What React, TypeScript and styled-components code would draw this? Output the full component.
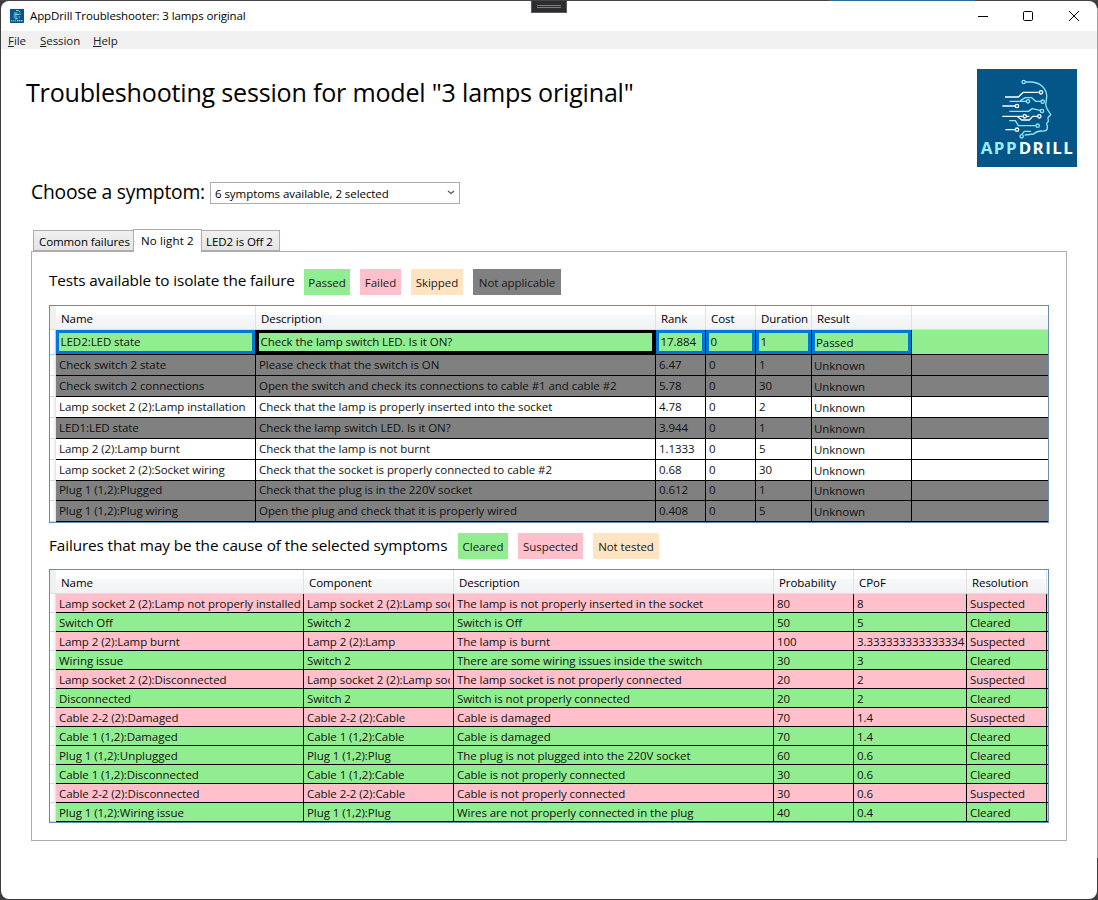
import React from "react";
import styled, { createGlobalStyle, css } from "styled-components";

const GREEN = "#90ee90";
const PINK = "#ffc0cb";
const BISQUE = "#ffe4c4";
const GRAY = "#808080";

const Global = createGlobalStyle`
  * { box-sizing: border-box; }
  html, body { margin: 0; padding: 0; }
  body {
    width: 1098px;
    height: 900px;
    overflow: hidden;
    background: #3c3c3e;
    color: #000;
    font-family: "Open Sans", "Noto Sans", sans-serif;
    font-size: 11.5px;
    letter-spacing: -0.06px;
    line-height: 16px;
  }
`;

const Desktop = styled.div`
  width: 1098px;
  height: 900px;
  padding: 1px;
  background: linear-gradient(90deg, #434247 0 829px, #2d6a96 829px 975px, #434247 975px) top / 100% 1px no-repeat,
    linear-gradient(#3c3c3e 0 8px, #a2a2a2 8px 858px, #3c3c3e 858px) right / 1px 100% no-repeat, #3c3c3e;
`;

const Window = styled.div`
  position: relative;
  width: 1096px;
  height: 898px;
  background: #fff;
  border-radius: 8px;
  overflow: hidden;
`;

const DragHandle = styled.div`
  position: absolute;
  left: 530px;
  top: -1px;
  width: 36px;
  height: 13px;
  background: #2d2d2f;
  border: 1px solid #5c5c5e;
  border-top: 0;
  display: flex;
  flex-direction: column;
  align-items: center;
  padding-top: 5px;
  gap: 1px;
  &::before, &::after {
    content: "";
    width: 24px;
    height: 1px;
    background: #7d7d7f;
  }
`;

const TitleBar = styled.header`
  display: flex;
  align-items: center;
  height: 30px;
  padding-left: 9px;
`;

const WindowTitle = styled.span`
  flex: 1;
  padding-left: 6px;
  letter-spacing: -0.11px;
`;

const Controls = styled.div`
  display: flex;
  gap: 35px;
  padding-right: 18px;
  svg { display: block; }
  svg:last-child { margin-left: 1px; }
`;

const MenuBar = styled.nav`
  display: flex;
  height: 18px;
  background: #f0f0f0;
  color: #212121;
  padding-left: 7px;
  gap: 14px;
  line-height: 19px;
`;

const MenuItem = styled.span<{ $w: number }>`
  width: ${(p) => p.$w}px;
  white-space: nowrap;
  u { text-underline-offset: 1px; text-decoration-thickness: 1px; }
`;

const Banner = styled.section`
  display: flex;
  justify-content: space-between;
  align-items: flex-start;
  height: 119px;
  padding: 20px 20px 0 25px;
`;

const Heading = styled.h1`
  margin: 5px 0 0;
  font-size: 25.1px;
  font-weight: 400;
  line-height: 36px;
  letter-spacing: -0.21px;
  white-space: nowrap;
`;

const Chooser = styled.section`
  display: flex;
  height: 61px;
  padding: 14px 0 0 30px;
`;

const ChooserLabel = styled.label`
  width: 179px;
  margin-top: -4px;
  font-size: 19.3px;
  line-height: 28px;
  letter-spacing: -0.23px;
  white-space: nowrap;
`;

const Combo = styled.div`
  display: flex;
  justify-content: space-between;
  width: 250px;
  height: 22px;
  padding: 3px 4px 0;
  border: 1px solid #acacac;
`;

const TabStrip = styled.div`
  position: relative;
  z-index: 1;
  display: flex;
  align-items: flex-end;
  height: 23px;
  margin: 0 0 -1px 32px;
`;

const Tab = styled.div<{ $w: number; $active?: boolean }>`
  width: ${(p) => p.$w}px;
  height: 21px;
  margin-bottom: 1px;
  padding: 3px 0 0 5px;
  border: 1px solid #acacac;
  background: linear-gradient(#f0f0f0, #e5e5e5);
  letter-spacing: -0.09px;
  white-space: nowrap;
  & + & { margin-left: -1px; padding-left: 4px; }
  ${(p) =>
    p.$active &&
    css`
      height: 23px;
      margin-bottom: 0;
      border-bottom: 0;
      background: #fff;
      letter-spacing: 0.15px;
      && { padding: 3px 0 0 7px; }
    `}
`;

const ActiveLabel = styled.span`
  display: block;
  padding-left: 3px;
`;

const Panel = styled.main`
  width: 1036px;
  height: 590px;
  margin-left: 30px;
  padding: 17px 17px 0;
  border: 1px solid #acacac;
`;

const Legend = styled.div`
  display: flex;
  gap: 10px;
  height: 26px;
`;

const LegendTitle = styled.h2<{ $w: number; $line: number }>`
  width: ${(p) => p.$w}px;
  margin: 0;
  font-size: 15.3px;
  font-weight: 400;
  line-height: ${(p) => p.$line}px;
  letter-spacing: -0.11px;
  white-space: nowrap;
`;

const Chip = styled.span<{ $w: number; $bg: string }>`
  width: ${(p) => p.$w}px;
  background: ${(p) => p.$bg};
  color: #1a1a1a;
  text-align: center;
  line-height: 28px;
  white-space: nowrap;
`;

const Grid = styled.div<{ $cols: string }>`
  --cols: ${(p) => p.$cols};
  width: 1000px;
  margin: 10px 0;
  border: 1px solid #688caf;
  overflow: hidden;
`;

const HeadRow = styled.div`
  display: grid;
  grid-template-columns: var(--cols);
  height: 24px;
  background: linear-gradient(#fff 0 40%, #f7f8fa 40%, #f1f2f4);
  border-bottom: 1px solid #dcdddf;
`;

const Corner = styled.div`
  background: #f0f0f0;
`;

const HeadCell = styled.div`
  padding: 5px 0 0 5px;
  border-right: 1px solid #e0e1e3;
  white-space: nowrap;
`;

const Row = styled.div<{ $h: number; $bg: string }>`
  display: grid;
  grid-template-columns: var(--cols);
  height: ${(p) => p.$h}px;
  background: ${(p) => p.$bg};
`;

const RowHeader = styled.div<{ $current?: boolean }>`
  background: linear-gradient(90deg, #fff 0 40%, #f1f2f4);
  border-right: 1px solid ${(p) => (p.$current ? "#9adcf7" : "#e4e5e7")};
  border-bottom: 1px solid ${(p) => (p.$current ? "#9adcf7" : "#d9dadc")};
`;

const Cell = styled.div<{ $frame?: string; $result?: boolean; $top: number }>`
  padding: ${(p) => p.$top + (p.$result ? 1 : 0)}px 0 0 ${(p) => (p.$result ? 2 : 3)}px;
  border-right: 1px solid #000;
  border-bottom: 1px solid #000;
  color: #111;
  white-space: nowrap;
  overflow: hidden;
  ${(p) =>
    p.$frame &&
    css`
      box-shadow: inset 0 0 0 3px ${p.$frame};
      padding-left: ${p.$result ? 4 : 4.6}px;
      padding-top: ${p.$result ? 5 : 4}px;
    `}
`;

const Clip = styled.span`
  display: block;
  margin-right: 3px;
  overflow: hidden;
`;

const Filler = styled.div`
  border-bottom: 1px solid #000;
`;

const AppIcon = () => (
  <svg width="14" height="14" viewBox="0 0 14 14">
    <rect width="14" height="14" fill="#045688" />
    <g fill="none" stroke="#9be8f5" strokeWidth="0.9">
      <path d="M6 1.5h2.5l1.5 2M4 4h3.5M3.5 6h3M5 5.5h4M3.5 8h3.5M8.5 8h1.5M5 9.7h3M10 4.5v1.5" />
    </g>
    <path d="M1 11.8h5" stroke="#9be8f5" strokeDasharray="1.2 .6" />
    <path d="M7 11.8h6" stroke="#fff" strokeDasharray="1.2 .6" />
  </svg>
);

const Logo = () => (
  <svg width="100" height="98" viewBox="33 27 300 294">
    <rect x="33" y="27" width="300" height="294" fill="#045688" />
    <g fill="none" stroke="#8ee6fa" strokeWidth="4" strokeLinejoin="round">
      <path d="M179 66H197C222 68 239 83 242 105C243 118 238 128 240 138C242 150 253 158 254 164C253 169 246 168 246 174L247 184L242 190L244 199C246 212 237 214 226 213C214 213 209 216 203 222L176 225" />
      <path d="M131 124H180M163 122L178 113H197L209 124H225" />
      <path d="M130 154H187L199 146L222 151" />
      <path d="M130 182H148L157 197H209" />
      <path d="M167 224L175 214H195" />
      <circle cx="173" cy="66" r="5" />
      <circle cx="186" cy="124" r="5" />
      <circle cx="230" cy="125" r="5" />
      <circle cx="228" cy="153" r="5" />
      <circle cx="215" cy="197" r="5" />
      <circle cx="167" cy="229" r="5" />
    </g>
    <g fill="none" stroke="#fff" strokeWidth="4" strokeLinejoin="round">
      <path d="M117 111H157L172 97H218" />
      <path d="M109 138H147" />
      <path d="M109 169H170M182 169H190M155 170L167 180H190L200 169H214" />
      <path d="M118 209H147" />
      <circle cx="225" cy="97" r="5" />
      <circle cx="153" cy="138" r="5" />
      <circle cx="176" cy="169" r="5" />
      <circle cx="220" cy="169" r="5" />
      <circle cx="153" cy="209" r="5" />
    </g>
    <g fontFamily="Open Sans" fontWeight="700" fontSize="46" letterSpacing="4">
      <text x="44" y="281" textLength="112" lengthAdjust="spacingAndGlyphs" fill="#9cecff">APP</text>
      <text x="158" y="281" textLength="167" lengthAdjust="spacingAndGlyphs" fill="#fff">DRILL</text>
    </g>
  </svg>
);

type Test = [string, string, string, string, string, string, string, number];
const tests: Test[] = [
  ["LED2:LED state", "Check the lamp switch LED. Is it ON?", "17.884", "0", "1", "Passed", GREEN, 25],
  ["Check switch 2 state", "Please check that the switch is ON", "6.47", "0", "1", "Unknown", GRAY, 21],
  ["Check switch 2 connections", "Open the switch and check its connections to cable #1 and cable #2", "5.78", "0", "30", "Unknown", GRAY, 21],
  ["Lamp socket 2 (2):Lamp installation", "Check that the lamp is properly inserted into the socket", "4.78", "0", "2", "Unknown", "#fff", 21],
  ["LED1:LED state", "Check the lamp switch LED. Is it ON?", "3.944", "0", "1", "Unknown", GRAY, 21],
  ["Lamp 2 (2):Lamp burnt", "Check that the lamp is not burnt", "1.1333", "0", "5", "Unknown", "#fff", 21],
  ["Lamp socket 2 (2):Socket wiring", "Check that the socket is properly connected to cable #2", "0.68", "0", "30", "Unknown", "#fff", 21],
  ["Plug 1 (1,2):Plugged", "Check that the plug is in the 220V socket", "0.612", "0", "1", "Unknown", GRAY, 20],
  ["Plug 1 (1,2):Plug wiring", "Open the plug and check that it is properly wired", "0.408", "0", "5", "Unknown", GRAY, 21],
];

const failures: string[][] = [
  ["Lamp socket 2 (2):Lamp not properly installed", "Lamp socket 2 (2):Lamp socket", "The lamp is not properly inserted in the socket", "80", "8", "Suspected"],
  ["Switch Off", "Switch 2", "Switch is Off", "50", "5", "Cleared"],
  ["Lamp 2 (2):Lamp burnt", "Lamp 2 (2):Lamp", "The lamp is burnt", "100", "3.333333333333334", "Suspected"],
  ["Wiring issue", "Switch 2", "There are some wiring issues inside the switch", "30", "3", "Cleared"],
  ["Lamp socket 2 (2):Disconnected", "Lamp socket 2 (2):Lamp socket", "The lamp socket is not properly connected", "20", "2", "Suspected"],
  ["Disconnected", "Switch 2", "Switch is not properly connected", "20", "2", "Cleared"],
  ["Cable 2-2 (2):Damaged", "Cable 2-2 (2):Cable", "Cable is damaged", "70", "1.4", "Suspected"],
  ["Cable 1 (1,2):Damaged", "Cable 1 (1,2):Cable", "Cable is damaged", "70", "1.4", "Cleared"],
  ["Plug 1 (1,2):Unplugged", "Plug 1 (1,2):Plug", "The plug is not plugged into the 220V socket", "60", "0.6", "Cleared"],
  ["Cable 1 (1,2):Disconnected", "Cable 1 (1,2):Cable", "Cable is not properly connected", "30", "0.6", "Cleared"],
  ["Cable 2-2 (2):Disconnected", "Cable 2-2 (2):Cable", "Cable is not properly connected", "30", "0.6", "Suspected"],
  ["Plug 1 (1,2):Wiring issue", "Plug 1 (1,2):Plug", "Wires are not properly connected in the plug", "40", "0.4", "Cleared"],
];

const App: React.FC = () => (
  <>
    <Global />
    <Desktop>
      <Window>
        <DragHandle />
        <TitleBar>
          <AppIcon />
          <WindowTitle>AppDrill Troubleshooter: 3 lamps original</WindowTitle>
          <Controls>
            <svg width="10" height="10"><path d="M0 5.5h10" stroke="#000" /></svg>
            <svg width="10" height="10"><rect x=".5" y=".5" width="9" height="9" rx="1" fill="none" stroke="#000" /></svg>
            <svg width="10" height="10"><path d="M0 0l10 10M10 0L0 10" stroke="#000" /></svg>
          </Controls>
        </TitleBar>
        <MenuBar>
          <MenuItem $w={18}><u>F</u>ile</MenuItem>
          <MenuItem $w={39}><u>S</u>ession</MenuItem>
          <MenuItem $w={25}><u>H</u>elp</MenuItem>
        </MenuBar>
        <Banner>
          <Heading>Troubleshooting session for model "3 lamps original"</Heading>
          <Logo />
        </Banner>
        <Chooser>
          <ChooserLabel>Choose a symptom:</ChooserLabel>
          <Combo>
            <span>6 symptoms available, 2 selected</span>
            <svg width="8" height="12"><path d="M1 5l3 2.5L7 5" fill="none" stroke="#555" strokeWidth="1.2" /></svg>
          </Combo>
        </Chooser>
        <TabStrip>
          <Tab $w={101}>Common failures</Tab>
          <Tab $w={69} $active><ActiveLabel>No light 2</ActiveLabel></Tab>
          <Tab $w={79}>LED2 is Off 2</Tab>
        </TabStrip>
        <Panel>
          <Legend>
            <LegendTitle $w={245} $line={22}>Tests available to isolate the failure</LegendTitle>
            <Chip $w={46} $bg={GREEN}>Passed</Chip>
            <Chip $w={41} $bg={PINK}>Failed</Chip>
            <Chip $w={52} $bg={BISQUE}>Skipped</Chip>
            <Chip $w={88} $bg={GRAY}>Not applicable</Chip>
          </Legend>
          <Grid $cols="6px 200px 400px 50px 50px 56px 100px 1fr">
            <HeadRow>
              <Corner />
              {["Name", "Description", "Rank", "Cost", "Duration", "Result"].map((h) => (
                <HeadCell key={h}>{h}</HeadCell>
              ))}
            </HeadRow>
            {tests.map(([name, desc, rank, cost, duration, result, bg, h], r) => (
              <Row key={r} $h={h} $bg={bg}>
                <RowHeader $current={r === 0} />
                {[name, desc, rank, cost, duration, result].map((t, c) => (
                  <Cell
                    key={c}
                    $top={h === 20 ? 1 : 2}
                    $result={c === 5}
                    $frame={r === 0 ? (c === 1 ? "#000" : "#0078d7") : undefined}
                  >
                    {t}
                  </Cell>
                ))}
                <Filler />
              </Row>
            ))}
          </Grid>
          <Legend>
            <LegendTitle $w={399} $line={24}>Failures that may be the cause of the selected symptoms</LegendTitle>
            <Chip $w={50} $bg={GREEN}>Cleared</Chip>
            <Chip $w={65} $bg={PINK}>Suspected</Chip>
            <Chip $w={66} $bg={BISQUE}>Not tested</Chip>
          </Legend>
          <Grid $cols="6px 248px 150px 320px 80px 113px 80px 1fr">
            <HeadRow>
              <Corner />
              {["Name", "Component", "Description", "Probability", "CPoF", "Resolution"].map((h) => (
                <HeadCell key={h}>{h}</HeadCell>
              ))}
            </HeadRow>
            {failures.map((f, r) => (
              <Row key={r} $h={19} $bg={f[5] === "Cleared" ? GREEN : PINK}>
                <RowHeader />
                {f.map((t, c) => (
                  <Cell key={c} $top={2}>
                    {c === 1 ? <Clip>{t}</Clip> : t}
                  </Cell>
                ))}
                <Filler />
              </Row>
            ))}
          </Grid>
        </Panel>
      </Window>
    </Desktop>
  </>
);

export default App;
